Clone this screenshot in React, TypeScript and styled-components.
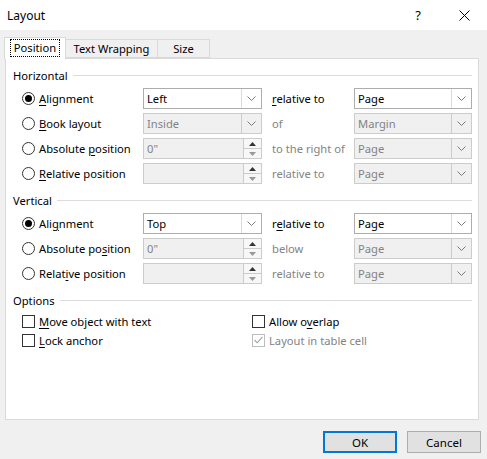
import React from "react";
import styled, { createGlobalStyle } from "styled-components";

const Global = createGlobalStyle`
  html, body { margin: 0; padding: 0; background: #f0f0f0; }
  body {
    font-family: "Segoe UI", "Noto Sans", "Liberation Sans", sans-serif;
    font-size: 11.2px;
    color: #000;
  }
  u { text-decoration: underline; text-underline-offset: 2px; }
`;

const Window = styled.div`
  width: 487px;
  height: 459px;
  display: flex;
  flex-direction: column;
  background: #f0f0f0;
  overflow: hidden;
`;

const TitleBar = styled.div`
  height: 30px;
  background: #fff;
  display: flex;
  align-items: center;
  padding-left: 7px;
`;

const Title = styled.div`
  flex: 1;
  font-size: 12px;
`;

const TitleButton = styled.div`
  width: 46px;
  height: 30px;
  display: flex;
  align-items: center;
  justify-content: center;
  font-size: 13px;
`;

const Body = styled.div`
  padding: 7px 8px 0 5px;
  display: flex;
  flex-direction: column;
`;

const TabStrip = styled.div`
  display: flex;
  align-items: flex-end;
  height: 21px;
  position: relative;
  z-index: 1;
`;

const Tab = styled.div<{ $active?: boolean; $w: number }>`
  box-sizing: border-box;
  width: ${(p) => p.$w}px;
  height: ${(p) => (p.$active ? 22 : 19)}px;
  margin-left: -1px;
  margin-bottom: ${(p) => (p.$active ? -1 : 0)}px;
  border: 1px solid #d9d9d9;
  border-bottom: ${(p) => (p.$active ? "none" : "1px solid #d9d9d9")};
  background: ${(p) => (p.$active ? "#fff" : "#f0f0f0")};
  display: flex;
  align-items: center;
  justify-content: center;
  padding-bottom: ${(p) => (p.$active ? 2 : 0)}px;
`;

const FocusRect = styled.span`
  border: 1px dotted #000;
  padding: 0 3px 1px;
  line-height: 15px;
`;

const Panel = styled.div`
  box-sizing: border-box;
  width: 474px;
  height: 362px;
  background: #fff;
  border: 1px solid #d9d9d9;
  padding: 8px 6px 0 7px;
`;

const Section = styled.div`
  & + & { margin-top: 8px; }
`;

const Header = styled.div`
  display: flex;
  align-items: center;
  height: 16px;
  margin-bottom: 5px;
  gap: 5px;
`;

const HeaderLine = styled.div`
  flex: 1;
  height: 1px;
  background: #dcdcdc;
`;

const Grid = styled.div`
  display: grid;
  grid-template-columns: 121px 119px 92px 118px;
  grid-auto-rows: 21px;
  row-gap: 4px;
  padding-left: 9px;
  align-items: center;
`;

const RadioLabel = styled.label`
  display: flex;
  align-items: center;
  gap: 4px;
  white-space: nowrap;
`;

const RadioCircle = styled.span<{ $on?: boolean }>`
  box-sizing: border-box;
  width: 13px;
  height: 13px;
  border-radius: 50%;
  border: 1px solid #333;
  display: flex;
  align-items: center;
  justify-content: center;
  &::after {
    content: "";
    width: 7px;
    height: 7px;
    border-radius: 50%;
    background: ${(p) => (p.$on ? "#000" : "transparent")};
  }
`;

const MidLabel = styled.span<{ $disabled?: boolean }>`
  padding-left: 10px;
  color: ${(p) => (p.$disabled ? "#838383" : "#000")};
  white-space: nowrap;
`;

const Combo = styled.div<{ $disabled?: boolean }>`
  box-sizing: border-box;
  height: 21px;
  display: flex;
  border: 1px solid ${(p) => (p.$disabled ? "#cccccc" : "#adadad")};
  background: ${(p) => (p.$disabled ? "#f0f0f0" : "#fff")};
  color: ${(p) => (p.$disabled ? "#838383" : "#000")};
`;

const ComboText = styled.div`
  flex: 1;
  display: flex;
  align-items: center;
  padding-left: 3px;
`;

const ComboButton = styled.div<{ $disabled?: boolean }>`
  width: 19px;
  border-left: 1px solid ${(p) => (p.$disabled ? "#cccccc" : "#dadada")};
  display: flex;
  align-items: center;
  justify-content: center;
`;

const SpinBox = styled.div`
  box-sizing: border-box;
  height: 21px;
  display: flex;
  border: 1px solid #cccccc;
  background: #f0f0f0;
  color: #838383;
`;

const SpinButtons = styled.div`
  width: 17px;
  display: flex;
  flex-direction: column;
  border-left: 1px solid #cccccc;
  background: #f7f7f7;
`;

const SpinHalf = styled.div<{ $bottom?: boolean }>`
  flex: 1;
  display: flex;
  align-items: center;
  justify-content: center;
  border-top: ${(p) => (p.$bottom ? "1px solid #cccccc" : "none")};
`;

const CheckGrid = styled.div`
  display: grid;
  grid-template-columns: 230px 1fr;
  grid-auto-rows: 16px;
  row-gap: 3px;
  padding-left: 9px;
  align-items: center;
`;

const CheckLabel = styled.label<{ $disabled?: boolean }>`
  display: flex;
  align-items: center;
  gap: 4px;
  color: ${(p) => (p.$disabled ? "#838383" : "#000")};
  white-space: nowrap;
`;

const CheckBox = styled.span<{ $disabled?: boolean }>`
  box-sizing: border-box;
  width: 13px;
  height: 13px;
  border: 1px solid ${(p) => (p.$disabled ? "#bcbcbc" : "#333")};
  background: #fff;
  display: flex;
  align-items: center;
  justify-content: center;
`;

const Footer = styled.div`
  display: flex;
  justify-content: flex-end;
  gap: 10px;
  padding-top: 11px;
  margin-right: -2px;
`;

const Button = styled.button<{ $default?: boolean }>`
  box-sizing: border-box;
  width: 74px;
  height: 22px;
  font: inherit;
  font-size: 11.5px;
  background: #e1e1e1;
  border: ${(p) => (p.$default ? "2px solid #0078d7" : "1px solid #adadad")};
  color: #000;
  padding: 0;
`;

const Chevron = () => (
  <svg width="9" height="6" viewBox="0 0 9 6">
    <polyline points="0.5,0.5 4.5,4.5 8.5,0.5" fill="none" stroke="#7a7a7a" strokeWidth="1" />
  </svg>
);

const Tri = ({ up, color }: { up?: boolean; color: string }) => (
  <svg width="7" height="4" viewBox="0 0 7 4">
    <polygon points={up ? "0,4 7,4 3.5,0" : "0,0 7,0 3.5,4"} fill={color} />
  </svg>
);

const ComboBox = ({ value, disabled }: { value: string; disabled?: boolean }) => (
  <Combo $disabled={disabled}>
    <ComboText>{value}</ComboText>
    <ComboButton $disabled={disabled}>
      <Chevron />
    </ComboButton>
  </Combo>
);

const Spin = ({ value }: { value: string }) => (
  <SpinBox>
    <ComboText>{value}</ComboText>
    <SpinButtons>
      <SpinHalf>
        <Tri up color="#333" />
      </SpinHalf>
      <SpinHalf $bottom>
        <Tri color="#999" />
      </SpinHalf>
    </SpinButtons>
  </SpinBox>
);

const Radio = ({ on, children }: { on?: boolean; children: React.ReactNode }) => (
  <RadioLabel>
    <RadioCircle $on={on} />
    <span>{children}</span>
  </RadioLabel>
);

const Check = ({ checked, disabled, children }: { checked?: boolean; disabled?: boolean; children: React.ReactNode }) => (
  <CheckLabel $disabled={disabled}>
    <CheckBox $disabled={disabled}>
      {checked && (
        <svg width="9" height="8" viewBox="0 0 9 8">
          <polyline points="0.5,4 3.2,6.8 8.5,0.8" fill="none" stroke="#a0a0a0" strokeWidth="1.1" />
        </svg>
      )}
    </CheckBox>
    <span>{children}</span>
  </CheckLabel>
);

export default function App() {
  return (
    <>
      <Global />
      <Window>
        <TitleBar>
          <Title>Layout</Title>
          <TitleButton>?</TitleButton>
          <TitleButton>
            <svg width="11" height="11" viewBox="0 0 11 11">
              <path d="M0.5 0.5 L10.5 10.5 M10.5 0.5 L0.5 10.5" stroke="#000" strokeWidth="1" />
            </svg>
          </TitleButton>
        </TitleBar>
        <Body>
          <TabStrip>
            <Tab $active $w={62}>
              <FocusRect>Position</FocusRect>
            </Tab>
            <Tab $w={93}>Text Wrapping</Tab>
            <Tab $w={53}>Size</Tab>
          </TabStrip>
          <Panel>
            <Section>
              <Header>
                Horizontal
                <HeaderLine />
              </Header>
              <Grid>
                <Radio on>
                  <u>A</u>lignment
                </Radio>
                <ComboBox value="Left" />
                <MidLabel>
                  <u>r</u>elative to
                </MidLabel>
                <ComboBox value="Page" />

                <Radio>
                  <u>B</u>ook layout
                </Radio>
                <ComboBox value="Inside" disabled />
                <MidLabel $disabled>of</MidLabel>
                <ComboBox value="Margin" disabled />

                <Radio>
                  Absolute <u>p</u>osition
                </Radio>
                <Spin value={'0"'} />
                <MidLabel $disabled>to the right of</MidLabel>
                <ComboBox value="Page" disabled />

                <Radio>
                  <u>R</u>elative position
                </Radio>
                <Spin value="" />
                <MidLabel $disabled>relative to</MidLabel>
                <ComboBox value="Page" disabled />
              </Grid>
            </Section>
            <Section>
              <Header>
                Vertical
                <HeaderLine />
              </Header>
              <Grid>
                <Radio on>
                  Ali<u>g</u>nment
                </Radio>
                <ComboBox value="Top" />
                <MidLabel>
                  r<u>e</u>lative to
                </MidLabel>
                <ComboBox value="Page" />

                <Radio>
                  Absolute po<u>s</u>ition
                </Radio>
                <Spin value={'0"'} />
                <MidLabel $disabled>below</MidLabel>
                <ComboBox value="Page" disabled />

                <Radio>
                  Relat<u>i</u>ve position
                </Radio>
                <Spin value="" />
                <MidLabel $disabled>relative to</MidLabel>
                <ComboBox value="Page" disabled />
              </Grid>
            </Section>
            <Section>
              <Header>
                Options
                <HeaderLine />
              </Header>
              <CheckGrid>
                <Check>
                  <u>M</u>ove object with text
                </Check>
                <Check>
                  Allow o<u>v</u>erlap
                </Check>
                <Check>
                  <u>L</u>ock anchor
                </Check>
                <Check checked disabled>
                  Layout in table cell
                </Check>
              </CheckGrid>
            </Section>
          </Panel>
          <Footer>
            <Button $default>OK</Button>
            <Button>Cancel</Button>
          </Footer>
        </Body>
      </Window>
    </>
  );
}
